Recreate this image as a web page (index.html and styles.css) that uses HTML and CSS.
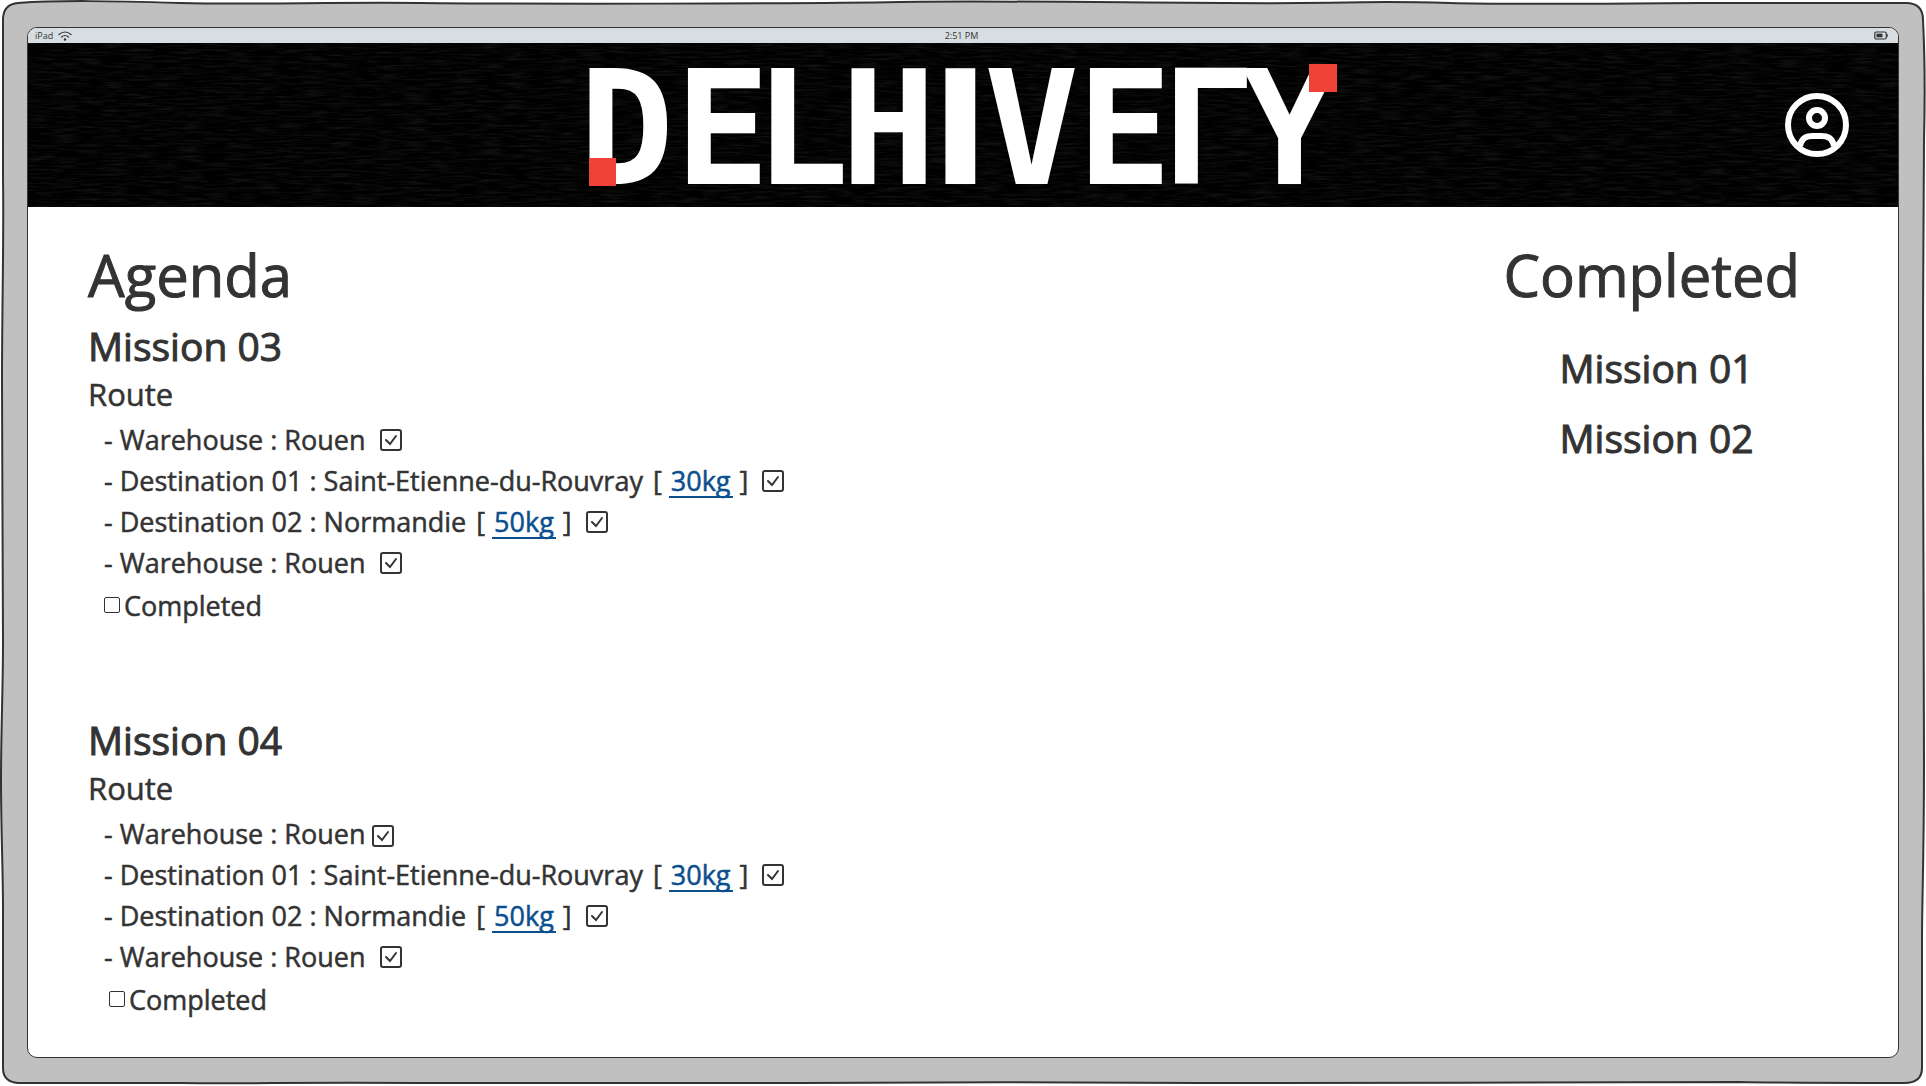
FILE: index.html
```html
<!DOCTYPE html>
<html lang="en">
<head>
<meta charset="utf-8">
<meta name="viewport" content="width=device-width, initial-scale=1">
<title>Delhivery – Agenda</title>
<link rel="stylesheet" href="styles.css">
</head>
<body>
<div class="device">
  <svg class="bezel" viewBox="0 0 1926 1086" preserveAspectRatio="none" aria-hidden="true">
    <path d="M18 3C60 0 110 1 180 3S330 2 420 3S800 4 900 2S1200 4 1300 3S1380 1 1450 3S1640 3 1700 3H1906Q1923 3 1923 20C1925 60 1925 100 1924 140S1923 330 1923 420S1924 660 1924 760S1922 900 1922 940V1068Q1922 1083 1904 1083C1840 1083 1780 1083 1740 1082S1300 1084 1200 1083S900 1082 800 1083S560 1084 420 1083S260 1084 180 1083L18 1083Q3 1082 3 1068V910C3 870 1 830 1 780S3 690 3 640S2 450 2 380S4 230 3 180V18Q4 4 18 3Z"/>
  </svg>
  <div class="screen">
    <div class="status">
      <span class="carrier">iPad
        <svg width="14" height="10" viewBox="0 0 14 10" aria-hidden="true"><path d="M1 3.5Q7-1.5 13 3.5M3.500 6Q7 3 10.500 6" fill="none" stroke="#333" stroke-width="1.200" stroke-linecap="round"/><circle cx="7" cy="8.500" r="1.200" fill="#333"/></svg>
      </span>
      <span>2:51 PM</span>
      <svg class="battery" width="14" height="9" viewBox="0 0 14 9" aria-hidden="true"><rect x=".8" y="1" width="11.500" height="7" rx="1.500" fill="none" stroke="#333" stroke-width="1.200"/><rect x="2.500" y="2.700" width="6" height="3.600" fill="#333"/><path d="M13.300 3.300V5.700" stroke="#333"/></svg>
    </div>
    <header class="banner">
      <svg class="grain" aria-hidden="true"><filter id="grain" x="0" y="0" width="100%" height="100%"><feTurbulence type="fractalNoise" baseFrequency="0.04 0.45" numOctaves="3" seed="4"/><feColorMatrix values="0 0 0 0 1  0 0 0 0 1  0 0 0 0 1  .16 0 0 0 -.065"/></filter><rect width="100%" height="100%" filter="url(#grain)"/></svg>
      <svg class="logo" viewBox="0 0 748 122" role="img" aria-label="Delhivery">
        <text y="120" x="-10 86 165 252">DELH</text>
        <text class="logo-slim" y="120" x="342">I</text>
        <text y="120" x="395 488 572 653">VEΓY</text>
        <rect class="logo-mark" x="0" y="94" width="27" height="28"/>
        <rect class="logo-mark" x="720" y="0" width="28" height="28"/>
      </svg>
      <button class="profile" type="button" aria-label="Profile">
        <svg viewBox="0 0 64 64" fill="none" stroke="#fff" stroke-width="6" aria-hidden="true"><circle cx="32" cy="32" r="29"/><circle cx="32" cy="25" r="8"/><path d="M15 53C17 44 22 43 28 43H36C42 43 47 44 49 53"/></svg>
      </button>
    </header>
    <main class="content">
      <section class="agenda">
        <h1>Agenda</h1>
        <article class="mission">
          <h2>Mission 03</h2>
          <h3>Route</h3>
          <ul>
            <li><label for="m3a">- Warehouse : Rouen</label><input id="m3a" type="checkbox" checked></li>
            <li><label for="m3b">- Destination 01 : Saint-Etienne-du-Rouvray</label><span>[ <a href="#load">30kg</a> ]</span><input id="m3b" type="checkbox" checked></li>
            <li><label for="m3c">- Destination 02 : Normandie</label><span>[ <a href="#load">50kg</a> ]</span><input id="m3c" type="checkbox" checked></li>
            <li><label for="m3d">- Warehouse : Rouen</label><input id="m3d" type="checkbox" checked></li>
          </ul>
          <label class="done"><input type="checkbox">Completed</label>
        </article>
        <article class="mission">
          <h2>Mission 04</h2>
          <h3>Route</h3>
          <ul>
            <li class="snug"><label for="m4a">- Warehouse : Rouen</label><input id="m4a" type="checkbox" checked></li>
            <li><label for="m4b">- Destination 01 : Saint-Etienne-du-Rouvray</label><span>[ <a href="#load">30kg</a> ]</span><input id="m4b" type="checkbox" checked></li>
            <li><label for="m4c">- Destination 02 : Normandie</label><span>[ <a href="#load">50kg</a> ]</span><input id="m4c" type="checkbox" checked></li>
            <li><label for="m4d">- Warehouse : Rouen</label><input id="m4d" type="checkbox" checked></li>
          </ul>
          <label class="done indented"><input type="checkbox">Completed</label>
        </article>
      </section>
      <section class="history">
        <h1>Completed</h1>
        <ul>
          <li>Mission 01</li>
          <li>Mission 02</li>
        </ul>
      </section>
    </main>
  </div>
</div>
</body>
</html>
```
FILE: styles.css
```css
* { box-sizing: border-box; }

body {
  margin: 0;
  background: #fff;
  color: #333;
  font-family: "Open Sans", "Noto Sans", sans-serif;
  font-weight: 500;
}

h1, h2, h3, ul { margin: 0; padding: 0; font-weight: 500; list-style: none; }

.device {
  position: relative;
  display: flex;
  min-height: 100vh;
  padding: 27px 27px 28px;
}

.bezel {
  position: absolute;
  inset: 0;
  width: 100%;
  height: 100%;
  fill: #c0c0c0;
  stroke: #333;
  stroke-width: 2px;
}

.screen {
  position: relative;
  flex: 1;
  display: flex;
  flex-direction: column;
  border: 1px solid #333;
  border-radius: 10px;
  background: #fff;
  overflow: hidden;
}

.status {
  display: grid;
  grid-template-columns: 1fr auto 1fr;
  align-items: center;
  height: 15px;
  padding: 0 10px 0 7px;
  background: #d7dde1;
  font-size: 9px;
  line-height: 15px;
}

.carrier { display: flex; align-items: center; gap: 5px; }

.battery { justify-self: end; }

.banner {
  position: relative;
  display: grid;
  grid-template-columns: 1fr auto 1fr;
  align-items: center;
  height: 164px;
  padding: 0 49px;
  background: #000;
}

.grain { position: absolute; inset: 0; width: 100%; height: 100%; }

.logo {
  position: relative;
  grid-column: 2;
  width: 748px;
  height: 122px;
  overflow: visible;
  fill: #fff;
  font-family: "DejaVu Sans Mono", monospace;
  font-size: 158px;
  font-weight: 700;
}

.logo-slim { font-family: "DejaVu Sans", sans-serif; }

.logo-mark { fill: #ef4136; }

.profile {
  position: relative;
  justify-self: end;
  width: 64px;
  height: 64px;
  padding: 0;
  border: 0;
  background: none;
}

.profile svg { display: block; }

.content {
  display: flex;
  justify-content: space-between;
  padding: 28px 98px 32px 60px;
  -webkit-text-stroke: 0.5px currentColor;
}

h1 { font-size: 58px; line-height: 80px; }

h1, h2, .history li { -webkit-text-stroke-width: 1px; }

h2, .history li { font-size: 39px; }

h2 { padding-top: 4px; line-height: 54px; }

h3 { font-size: 31px; line-height: 42px; }

.mission + .mission { margin-top: 82px; }

.mission ul { padding: 4px 0 0 16px; }

.mission li {
  display: flex;
  align-items: center;
  gap: 10px;
  height: 41px;
  font-size: 27px;
}

.mission a {
  display: inline-block;
  padding: 0 2px;
  border-bottom: 2px solid;
  color: #0b4f8f;
  line-height: 30px;
  text-decoration: none;
}

input {
  appearance: none;
  width: 16px;
  height: 16px;
  margin: 0;
  border: 1px solid #333;
  border-radius: 2px;
  background: #fff;
}

.mission li input {
  width: 22px;
  height: 22px;
  margin-left: 4px;
  border-width: 2px;
  border-radius: 3px;
}

.mission li.snug input { margin: 4px 0 0 -4px; }

input:checked {
  background: url("data:image/svg+xml,%3Csvg xmlns='http://www.w3.org/2000/svg' viewBox='0 0 18 18'%3E%3Cpath d='M4 9l4 4 6-8' fill='none' stroke='%23333' stroke-width='2' stroke-linecap='round'/%3E%3C/svg%3E") center / 18px 18px no-repeat;
}

.done {
  display: flex;
  align-items: center;
  gap: 4px;
  height: 44px;
  padding-left: 16px;
  font-size: 27px;
}

.done.indented { padding-left: 21px; }

.history ul { padding: 18px 0 0 56px; }

.history li { line-height: 70px; }
```
